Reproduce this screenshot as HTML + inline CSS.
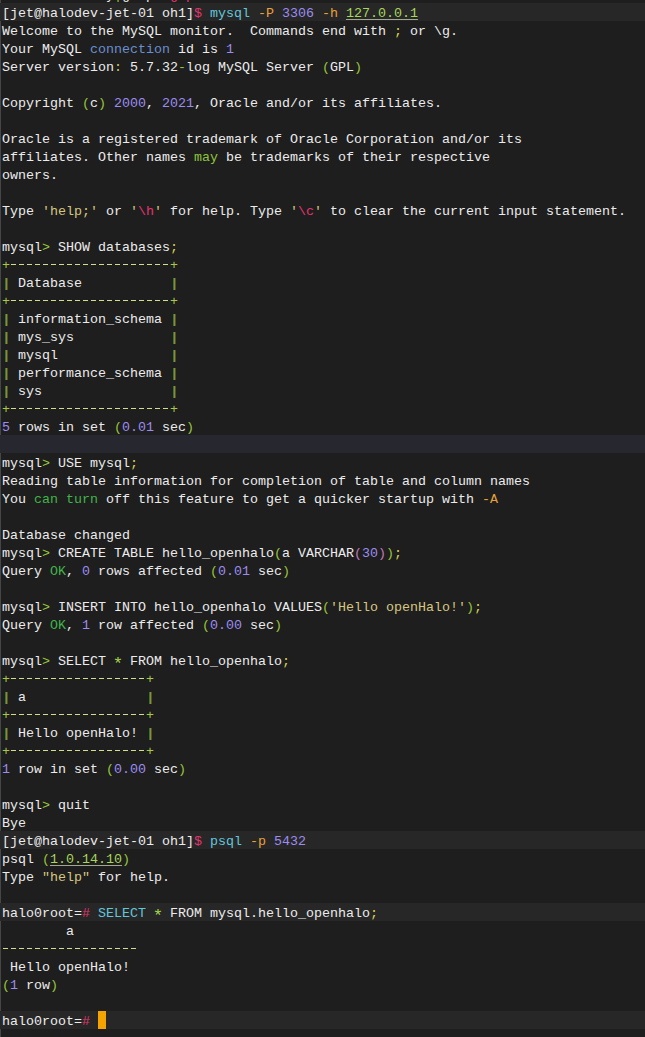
<!DOCTYPE html>
<html><head><meta charset="utf-8"><style>
html,body{margin:0;padding:0;width:645px;height:1037px;overflow:hidden;background:#1e1e1e;}
.strip{position:absolute;left:0;top:0;width:1px;height:1037px;background:#464646;}
.hl{position:absolute;left:0;width:645px;height:18px;background:#272727;}
.hlb{background:#26272f;}
.txt{position:absolute;left:2px;top:5px;font-family:"Liberation Mono",monospace;font-size:13.333px;line-height:18px;white-space:pre;color:#ececec;}
.pk{color:#e0356e}
.cy{color:#62c6dc}
.or{color:#e8a03c}
.pu{color:#9c8cf0}
.ip{color:#a6d65a;text-decoration:underline;text-decoration-color:#a0a890;text-underline-offset:2px}
.g1{color:#98c43c}
.g2{color:#c07ab8}
.gd{color:#98c43c}
.tb{color:#a8c848}
.tp{color:#80a03c;text-shadow:0.7px 0 0 #80a03c}
.sc{color:#d8d050}
.gt{color:#98c83c}
.co{color:#c8c860}
.st{color:#d6c682}
.bl{color:#6a8ed0}
.gr{color:#40b44a}

.cur{position:absolute;left:98px;top:1011px;width:8px;height:18px;background:#f5a300;}
.prev{position:absolute;left:2px;top:-13px;font-family:"Liberation Mono",monospace;font-size:13.333px;line-height:18px;white-space:pre;color:#ececec;}
.gy{color:#8ec43c}
.td{display:inline-block;height:18px;vertical-align:top;color:transparent;background:linear-gradient(90deg,transparent 1px,#d2de8c 1px,#d2de8c 6px,transparent 6px) 0 7px / 8px 1px repeat-x}
.ast{color:#a4d44c;display:inline-block;transform:translateY(3px) scale(1.3)}

</style></head><body>
<div class="strip"></div>
<div class="hl" style="top:3px"></div><div class="hl hlb" style="top:435px"></div><div class="hl" style="top:831px"></div><div class="hl" style="top:903px"></div><div class="hl" style="top:1011px"></div>
<div class="cur"></div>
<div class="prev">             y<span class="gt">|</span>g  p  <span class="pk">g</span> <span class="pk">p</span></div>
<div class="txt">[jet@halodev-jet-01 oh1]<span class="pk">$</span> <span class="cy">mysql</span> <span class="or">-P</span> <span class="pu">3306</span> <span class="or">-h</span> <span class="ip">127.0.0.1</span>
Welcome to the MySQL monitor.  Commands end with <span class="sc">;</span> or \g.
Your MySQL <span class="bl">connection</span> id is <span class="pu">1</span>
Server version<span class="co">:</span> 5.7.32<span class="gd">-</span>log MySQL Server <span class="g1">(</span>GPL<span class="g1">)</span>

Copyright <span class="g1">(</span>c<span class="g1">)</span> <span class="pu">2000</span>, <span class="pu">2021</span>, Oracle and/or its affiliates.

Oracle is a registered trademark of Oracle Corporation and/or its
affiliates. Other names <span class="gy">may</span> be trademarks of their respective
owners.

Type <span class="st">&#x27;help;&#x27;</span> or <span class="st">&#x27;</span><span class="pk">\h</span><span class="st">&#x27;</span> for help. Type <span class="st">&#x27;</span><span class="pk">\c</span><span class="st">&#x27;</span> to clear the current input statement.

mysql<span class="gt">&gt;</span> SHOW databases<span class="sc">;</span>
<span class="tb">+</span><span class="td">--------------------</span><span class="tb">+</span>
<span class="tp">|</span> Database           <span class="tp">|</span>
<span class="tb">+</span><span class="td">--------------------</span><span class="tb">+</span>
<span class="tp">|</span> information_schema <span class="tp">|</span>
<span class="tp">|</span> mys_sys            <span class="tp">|</span>
<span class="tp">|</span> mysql              <span class="tp">|</span>
<span class="tp">|</span> performance_schema <span class="tp">|</span>
<span class="tp">|</span> sys                <span class="tp">|</span>
<span class="tb">+</span><span class="td">--------------------</span><span class="tb">+</span>
<span class="pu">5</span> rows in set <span class="g1">(</span><span class="pu">0.01</span> sec<span class="g1">)</span>

mysql<span class="gt">&gt;</span> USE mysql<span class="sc">;</span>
Reading table information for completion of table and column names
You <span class="gr">can</span> <span class="gr">turn</span> off this feature to get a quicker startup with <span class="or">-A</span>

Database changed
mysql<span class="gt">&gt;</span> CREATE TABLE hello_openhalo<span class="g1">(</span>a VARCHAR<span class="g2">(</span><span class="pu">30</span><span class="g2">)</span><span class="g1">)</span><span class="sc">;</span>
Query <span class="gr">OK</span>, <span class="pu">0</span> rows affected <span class="g1">(</span><span class="pu">0.01</span> sec<span class="g1">)</span>

mysql<span class="gt">&gt;</span> INSERT INTO hello_openhalo VALUES<span class="g1">(</span><span class="st">&#x27;Hello openHalo!&#x27;</span><span class="g1">)</span><span class="sc">;</span>
Query <span class="gr">OK</span>, <span class="pu">1</span> row affected <span class="g1">(</span><span class="pu">0.00</span> sec<span class="g1">)</span>

mysql<span class="gt">&gt;</span> SELECT <span class="ast">*</span> FROM hello_openhalo<span class="sc">;</span>
<span class="tb">+</span><span class="td">-----------------</span><span class="tb">+</span>
<span class="tp">|</span> a               <span class="tp">|</span>
<span class="tb">+</span><span class="td">-----------------</span><span class="tb">+</span>
<span class="tp">|</span> Hello openHalo! <span class="tp">|</span>
<span class="tb">+</span><span class="td">-----------------</span><span class="tb">+</span>
<span class="pu">1</span> row in set <span class="g1">(</span><span class="pu">0.00</span> sec<span class="g1">)</span>

mysql<span class="gt">&gt;</span> quit
Bye
[jet@halodev-jet-01 oh1]<span class="pk">$</span> <span class="cy">psql</span> <span class="or">-p</span> <span class="pu">5432</span>
psql <span class="g1">(</span><span class="ip">1.0.14.10</span><span class="g1">)</span>
Type <span class="st">&quot;help&quot;</span> for help.

halo0root=<span class="pk">#</span> <span class="cy">SELECT</span> <span class="ast">*</span> FROM mysql.hello_openhalo<span class="sc">;</span>
        a
<span class="td">-----------------</span>
 Hello openHalo!
<span class="g1">(</span><span class="pu">1</span> row<span class="g1">)</span>

halo0root=<span class="pk">#</span> </div>
</body></html>
